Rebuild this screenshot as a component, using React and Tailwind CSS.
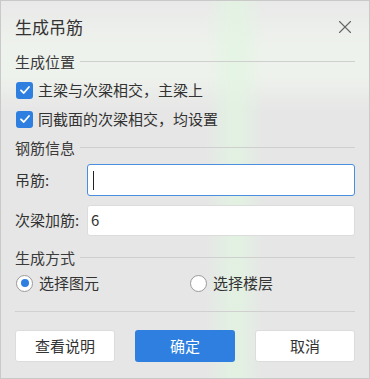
import { X } from 'lucide-react';

function Section({ title }) {
  return (
    <div className="flex items-center gap-[5px] h-5">
      <span className="text-[15px] text-[#3a3a3a] leading-none">{title}</span>
      <div className="flex-1 h-px bg-[#cfcfcf]" />
    </div>
  );
}

function Check({ label }) {
  return (
    <label className="flex items-center gap-[5px] h-[20px]">
      <span className="w-[17px] h-[17px] rounded-[3px] bg-[#2f7fe0] flex items-center justify-center">
        <svg width="12" height="12" viewBox="0 0 12 12" fill="none">
          <path d="M2 6.3 L4.8 9 L10 3" stroke="white" strokeWidth="1.8" strokeLinecap="round" strokeLinejoin="round" />
        </svg>
      </span>
      <span className="text-[15px] text-[#333]">{label}</span>
    </label>
  );
}

function Radio({ label, on }) {
  return (
    <label className="flex items-center gap-[6px]">
      <span className="w-[17px] h-[17px] rounded-full border border-[#9a9a9a] bg-white flex items-center justify-center">
        {on && <span className="w-[8px] h-[8px] rounded-full bg-[#2f7fe0]" />}
      </span>
      <span className="text-[15px] text-[#333]">{label}</span>
    </label>
  );
}

export default function App() {
  return (
    <div
      className="w-[370px] h-[379px] border border-[#c9c9c9] text-[#333] bg-[#e6e6e6] bg-[linear-gradient(90deg,transparent_205px,rgba(225,245,225,0.7)_230px,rgba(225,245,225,0.7)_240px,transparent_262px),linear-gradient(180deg,#e9e9e9_0px,#eef2ec_45px,#eef2ec_75px,#e6e6e6_110px)] flex flex-col"
      style={{ fontFamily: '"Noto Sans CJK SC", "Noto Sans", sans-serif' }}
    >
      <div className="flex items-center justify-between pl-[14px] pr-[13px] pt-[13px] h-[38px]">
        <span className="text-[17px] text-[#333]">生成吊筋</span>
        <X size={22} strokeWidth={1.2} className="text-[#666]" />
      </div>

      <div className="px-[14px] pt-[12px] flex flex-col">
        <Section title="生成位置" />
        <div className="flex flex-col gap-[9px] mt-[9px] pl-[1px]">
          <Check label="主梁与次梁相交，主梁上" />
          <Check label="同截面的次梁相交，均设置" />
        </div>

        <div className="mt-[8px]">
          <Section title="钢筋信息" />
        </div>
        <div className="flex items-center mt-[7px]">
          <span className="w-[72px] text-[15px] text-[#333]">吊筋:</span>
          <div className="flex-1 h-[32px] bg-white border border-[#4a8ee0] rounded-[3px] flex items-center px-[5px]">
            <span className="w-px h-[19px] bg-[#222]" />
          </div>
        </div>
        <div className="flex items-center mt-[9px]">
          <span className="w-[72px] text-[15px] text-[#333]">次梁加筋:</span>
          <div className="flex-1 h-[31px] bg-white border border-[#dcdcdc] rounded-[3px] flex items-center px-[3px] text-[15px] text-[#333]">
            6
          </div>
        </div>

        <div className="mt-[11px]">
          <Section title="生成方式" />
        </div>
        <div className="flex items-center mt-[6px] h-[20px] pl-[1px]">
          <div className="w-[174px]">
            <Radio label="选择图元" on />
          </div>
          <Radio label="选择楼层" />
        </div>

        <div className="h-px bg-[#d0d0d0] mt-[18px]" />

        <div className="flex justify-between mt-[18px]">
          <button className="w-[100px] h-[32px] bg-white border border-[#dcdcdc] rounded-[3px] text-[15px] text-[#333]">查看说明</button>
          <button className="w-[100px] h-[32px] bg-[#2f7fe0] rounded-[3px] text-[15px] text-white">确定</button>
          <button className="w-[100px] h-[32px] bg-white border border-[#dcdcdc] rounded-[3px] text-[15px] text-[#333]">取消</button>
        </div>
      </div>
    </div>
  );
}
